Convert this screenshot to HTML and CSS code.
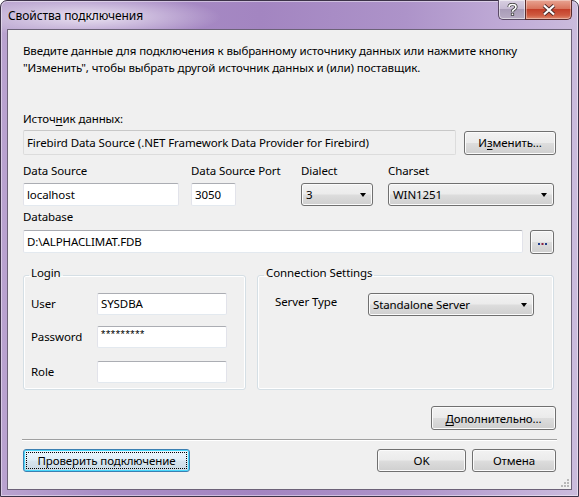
FILE: index.html
```html
<!DOCTYPE html>
<html lang="ru">
<head>
<meta charset="utf-8">
<link rel="stylesheet" href="styles.css">
</head>
<body>
<div class="window">
  <div class="titlebar">
    <div class="title">Свойства подключения</div>
    <div class="caption-buttons">
      <div class="cap-btn help">
        <svg width="11" height="13" viewBox="0 0 11 13"><path d="M2 4 Q2 1.5 5.5 1.5 Q9 1.5 9 4 Q9 5.5 7 6.5 Q5.5 7.3 5.5 8.8" fill="none" stroke="#3b3b3b" stroke-width="3.2"/><path d="M2 4 Q2 1.5 5.5 1.5 Q9 1.5 9 4 Q9 5.5 7 6.5 Q5.5 7.3 5.5 8.8" fill="none" stroke="#fff" stroke-width="1.6"/><rect x="3.9" y="9.8" width="3.2" height="3" fill="#3b3b3b"/><rect x="4.7" y="10.5" width="1.6" height="1.6" fill="#fff"/></svg>
      </div>
      <div class="cap-btn close">
        <svg width="14" height="12" viewBox="0 0 14 12"><path d="M2 1.5 L12 10.5 M12 1.5 L2 10.5" stroke="#4a2a2a" stroke-width="4"/><path d="M2 1.5 L12 10.5 M12 1.5 L2 10.5" stroke="#fff" stroke-width="2.2"/></svg>
      </div>
    </div>
  </div>
  <div class="client">
    <p class="intro">Введите данные для подключения к выбранному источнику данных или нажмите кнопку<br>"Изменить", чтобы выбрать другой источник данных и (или) поставщик.</p>
    <div class="label src-label">Источ<u>н</u>ик данных:</div>
    <div class="src-row">
      <div class="readonly">Firebird Data Source (.NET Framework Data Provider for Firebird)</div>
      <div class="btn change">И<u>з</u>менить...</div>
    </div>
    <div class="fields">
      <div class="label">Data Source</div>
      <div class="label">Data Source Port</div>
      <div class="label">Dialect</div>
      <div class="label">Charset</div>
      <div class="input w-ds">localhost</div>
      <div class="input w-port">3050</div>
      <div class="combo w-dialect"><span>3</span><i class="arrow"></i></div>
      <div class="combo w-charset"><span>WIN1251</span><i class="arrow"></i></div>
    </div>
    <div class="label db-label">Database</div>
    <div class="db-row">
      <div class="input db">D:\ALPHACLIMAT.FDB</div>
      <div class="btn dots"><svg width="9" height="3" viewBox="0 0 9 3"><rect x="0" y="0" width="2" height="2" fill="#203e8a"/><rect x="3.5" y="0" width="2" height="2" fill="#8a2040"/><rect x="7" y="0" width="2" height="2" fill="#203e8a"/></svg></div>
    </div>
    <div class="groups">
      <fieldset class="group login">
        <legend>Login</legend>
        <div class="grow r1"><span class="glabel">User</span><div class="input gin">SYSDBA</div></div>
        <div class="grow r2"><span class="glabel">Password</span><div class="input gin pw">*********</div></div>
        <div class="grow r3"><span class="glabel">Role</span><div class="input gin"></div></div>
      </fieldset>
      <fieldset class="group conn">
        <legend>Connection Settings</legend>
        <div class="grow r1"><span class="glabel wide">Server Type</span><div class="combo w-server"><span>Standalone Server</span><i class="arrow"></i></div></div>
      </fieldset>
    </div>
    <div class="adv-row"><div class="btn adv"><u>Д</u>ополнительно...</div></div>
    <div class="separator"></div>
    <div class="bottom-row">
      <div class="btn test focused"><span class="focus-rect">Проверить подключение</span></div>
      <div class="btn ok">OK</div>
      <div class="btn cancel">Отмена</div>
    </div>
    <div class="grip">
      <svg width="10" height="10" viewBox="0 0 10 10">
        <g fill="#b8b8b8"><rect x="7" y="1" width="2" height="2"/><rect x="4" y="4" width="2" height="2"/><rect x="7" y="4" width="2" height="2"/><rect x="1" y="7" width="2" height="2"/><rect x="4" y="7" width="2" height="2"/><rect x="7" y="7" width="2" height="2"/></g>
      </svg>
    </div>
  </div>
</div>
</body>
</html>
```
FILE: styles.css
```css
* { box-sizing: border-box; }
html, body { margin: 0; padding: 0; background: #ffffff; }
body {
  font-family: "Noto Sans", "Open Sans", "DejaVu Sans", sans-serif;
  font-size: 11.5px;
  letter-spacing: -0.1px;
  color: #000;
}
u { text-decoration: underline; text-underline-offset: 2px; }

.window {
  width: 579px;
  height: 497px;
  border: 1px solid #3c3248;
  border-radius: 7px 7px 0 0;
  background:
    radial-gradient(ellipse 130px 22px at 90px 16px, rgba(255,255,255,0.75), rgba(255,255,255,0) 100%),
    linear-gradient(to right, #b9a3cf 0%, #a98dc6 18%, #a385c1 45%, #ad93c9 70%, #c2aed8 90%, #cbbcdd 100%);
  display: flex;
  flex-direction: column;
  box-shadow: inset 0 0 0 1px rgba(255,255,255,0.45);
}

.titlebar {
  height: 28px;
  display: flex;
  align-items: flex-start;
  padding-left: 7px;
}
.title {
  margin-top: 7px;
  line-height: 16px;
  font-size: 12px;
  color: #000;
}
.caption-buttons {
  margin-left: auto;
  margin-right: 6px;
  margin-top: -1px;
  display: flex;
}
.cap-btn {
  height: 20px;
  display: flex;
  align-items: center;
  justify-content: center;
  border: 1px solid #5a4a66;
  border-top: none;
}
.help {
  width: 27px;
  border-radius: 0 0 0 5px;
  border-right: none;
  background: linear-gradient(#d9d0e2 0%, #c6bad3 45%, #a99cb8 50%, #b7acc4 100%);
  box-shadow: inset 0 0 0 1px rgba(255,255,255,0.5);
}
.close {
  width: 47px;
  border-radius: 0 0 5px 0;
  border-color: #5b2c2c;
  background: linear-gradient(#e8a493 0%, #d9755e 45%, #c4402a 50%, #cf5a40 80%, #e08a70 100%);
  box-shadow: inset 0 0 0 1px rgba(255,255,255,0.35);
}

.client {
  position: relative;
  margin: 0 6px;
  height: 461px;
  border: 1px solid #6c6278;
  background: #f0f0f0;
  padding: 0 15px 0 15px;
  display: flex;
  flex-direction: column;
}

.intro {
  margin: 12px 0 0 0;
  line-height: 17px;
}
.label { line-height: 16px; }
.src-label { margin-top: 35px; }

.src-row {
  margin-top: 3px;
  display: flex;
  align-items: center;
  height: 25px;
}
.readonly {
  width: 434px;
  height: 25px;
  border: 1px solid #dcdcdc;
  border-top-color: #c8c8c8;
  border-radius: 2px;
  background: #f0f0f0;
  padding-left: 3px;
  line-height: 23px;
  white-space: nowrap;
}
.btn {
  display: flex;
  align-items: center;
  justify-content: center;
  border: 1px solid #707070;
  border-radius: 3px;
  background: linear-gradient(#f2f2f2 0%, #ebebeb 49%, #dddddd 51%, #cfcfcf 100%);
  box-shadow: inset 0 0 0 1px #fbfbfb;
  white-space: nowrap;
}
.change {
  margin-left: 8px;
  width: 92px;
  height: 24px;
}

.fields {
  margin-top: 8px;
  display: grid;
  grid-template-columns: 168px 110px 87px 166px;
  grid-template-rows: 16px 23px;
  row-gap: 4px;
}
.input {
  height: 23px;
  background: #fff;
  border: 1px solid #e2e3ea;
  border-top-color: #abadb3;
  border-bottom-color: #e3e9ef;
  border-radius: 2px;
  padding-left: 3px;
  line-height: 21px;
  white-space: nowrap;
}
.w-ds { width: 156px; }
.w-port { width: 45px; }
.combo {
  height: 23px;
  display: flex;
  align-items: center;
  padding: 0 6px 0 4px;
  border: 1px solid #707070;
  border-radius: 3px;
  background: linear-gradient(#f2f2f2 0%, #ebebeb 49%, #dddddd 51%, #cfcfcf 100%);
  box-shadow: inset 0 0 0 1px #fbfbfb;
  white-space: nowrap;
}
.combo span { flex: 1; }
.arrow {
  width: 0;
  height: 0;
  border-left: 3.5px solid transparent;
  border-right: 3.5px solid transparent;
  border-top: 4px solid #000;
}
.w-dialect { width: 72px; }
.w-charset { width: 166px; }

.db-label { margin-top: 3px; }
.db-row {
  margin-top: 5px;
  display: flex;
  height: 23px;
}
.db { width: 500px; }
.dots {
  margin-left: 7px;
  width: 24px;
  height: 24px;
  align-items: flex-end;
  padding-bottom: 7px;
}

.groups {
  margin-top: 12px;
  display: flex;
  gap: 11px;
}
.group {
  margin: 0;
  border: 1px solid #d5dfe5;
  border-radius: 3px;
  box-shadow: inset 0 0 0 1px #ffffff;
  padding: 0 0 6px 7px;
  min-width: 0;
}
.group legend {
  padding: 0 2px 4px 2px;
  margin-left: -2px;
  line-height: 16px;
}
.login { width: 223px; }
.conn { width: 297px; padding-left: 17px; }
.conn legend { margin-left: -11px; }

.grow {
  display: flex;
  align-items: center;
  height: 22px;
}
.grow.r1 { margin-top: 8px; }
.grow.r2 { margin-top: 11px; }
.grow.r3 { margin-top: 13px; }
.glabel { width: 66px; line-height: 16px; }
.glabel.wide { width: 93px; margin-top: -5px; }
.gin { width: 130px; height: 22px; line-height: 20px; }
.pw { line-height: 14px; font-family: "Liberation Sans", sans-serif; font-size: 11px; letter-spacing: 0.6px; }
.w-server { width: 166px; height: 23px; }
.conn .r1 { height: 23px; }

.adv-row {
  margin-top: 16px;
  display: flex;
  justify-content: flex-end;
}
.adv { width: 125px; height: 24px; }

.separator {
  margin-top: 9px;
  margin-left: -1px;
  margin-right: -1px;
  height: 2px;
  border-top: 1px solid #a0a0a0;
  border-bottom: 1px solid #ffffff;
}
.bottom-row {
  margin-top: 8px;
  display: flex;
  height: 23px;
}
.test {
  width: 167px;
  height: 23px;
  border-color: #3c7fb1;
  box-shadow: inset 0 0 0 1px #48d8fb;
  background: linear-gradient(#eaf6fd 0%, #e0eef7 49%, #d7e5ef 51%, #c9d8e3 100%);
  padding: 2px;
}
.focus-rect {
  flex: 1;
  align-self: stretch;
  display: flex;
  align-items: center;
  justify-content: center;
  outline: 1px dotted #000;
  outline-offset: -1px;
}
.ok { margin-left: auto; width: 89px; height: 23px; }
.cancel { margin-left: 6px; width: 84px; height: 23px; }

.grip {
  position: absolute;
  right: 1px;
  bottom: 1px;
  width: 10px;
  height: 10px;
  line-height: 0;
}
```
